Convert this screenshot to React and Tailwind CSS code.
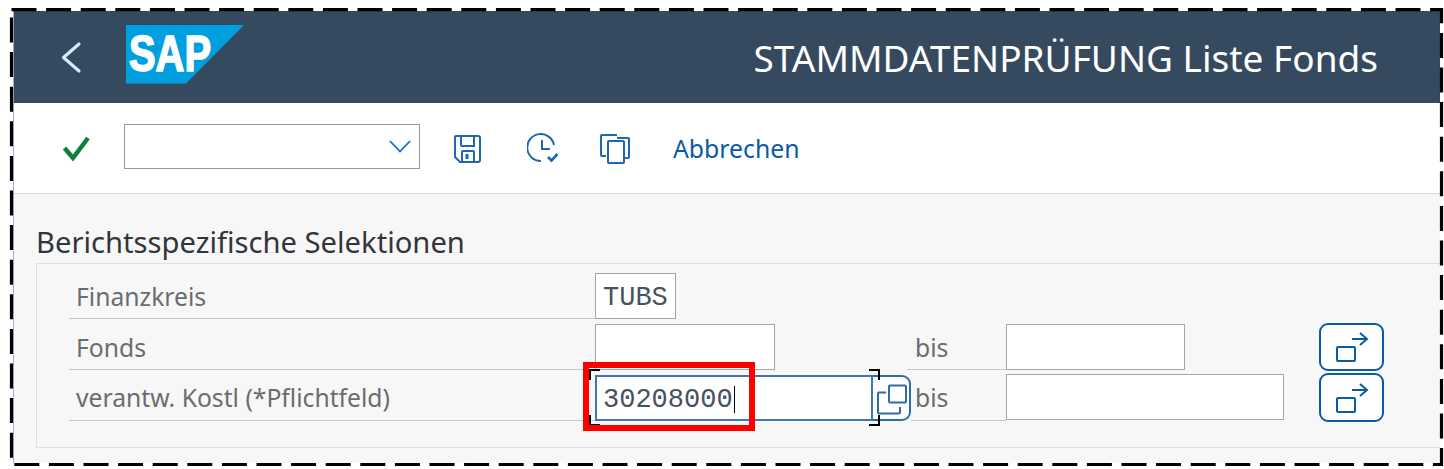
import React from "react";

const sans = { fontFamily: '"Noto Sans", sans-serif' };

function ValueHelpArrow({ tall }) {
  return (
    <button className={`w-[65px] ${tall ? "h-[49px]" : "h-[48px]"} rounded-[9px] border-2 border-[#0a5aa6] bg-white flex items-center justify-center shrink-0`}>
      <svg width="46" height="38" viewBox="0 0 46 38" fill="none" stroke="#0a5aa6" strokeWidth="2">
        <rect x="8" y="19" width="18" height="14" rx="1" />
        <path d="M23 11H38M31 5L38 11L31 17" />
      </svg>
    </button>
  );
}

function Field({ w, value, focused }) {
  return (
    <div
      className={`h-[46px] flex items-center bg-white shrink-0 text-[#46525e] text-[27px] ${focused ? "pl-[6px] pt-[4px] border-2 border-[#4178b0]" : "pl-[7px] pt-[4px] border border-[#a3a7ac]"}`}
      style={{ width: w, fontFamily: '"Liberation Mono", monospace' }}
    >
      {value}
      {focused && <span className="w-px h-[27px] bg-black ml-[1px] mt-[-2px]" />}
    </div>
  );
}

function Label({ children, nudge }) {
  return (
    <div className={`w-[526px] h-full flex items-center pl-[7px] ${nudge ? "pt-[8px]" : "pt-[6px]"} text-[24.7px] text-[#6a6d70] shrink-0 border-b border-b-[#c8c8c8] whitespace-nowrap`}>
      {children}
    </div>
  );
}

function Bis({ nudge }) {
  return (
    <span className={`w-[90px] h-[46px] flex items-center text-[24.7px] text-[#6a6d70] shrink-0 border-b border-b-[#c8c8c8] ${nudge ? "pt-[2px]" : ""}`}>
      <span className="ml-[-1px]">bis</span>
    </span>
  );
}

export default function App() {
  return (
    <div className="relative w-[1444px] h-[469px] bg-white pt-[11px] pl-[13px] pr-[4px] pb-[6px]" style={sans}>
      <div className="h-full flex flex-col border-l border-l-[#9db2cf]">
        <header className="h-[92px] shrink-0 bg-[#354a5f] flex items-center pl-[41px] pr-[62px]">
          <svg width="32" height="34" viewBox="0 0 32 34" fill="none" className="shrink-0">
            <path d="M24 4L8.5 17.5L24 31" stroke="#d6e8fb" strokeWidth="3.2" strokeLinecap="round" strokeLinejoin="round" />
          </svg>
          <svg width="118" height="60" viewBox="0 0 118 60" className="ml-[39px] mt-[-4px] shrink-0">
            <path d="M0 0H118L60 58.5H0Z" fill="#009fdf" />
            <text x="3" y="46" textLength="82" lengthAdjust="spacingAndGlyphs" fontFamily='"Liberation Sans", sans-serif' fontWeight="700" fontSize="50" fill="#fff" stroke="#fff" strokeWidth="1.6">SAP</text>
          </svg>
          <h1 className="ml-auto mt-[1px] text-[37px] text-white font-normal whitespace-nowrap">STAMMDATENPRÜFUNG Liste Fonds</h1>
        </header>

        <div className="h-[91px] shrink-0 bg-white border-b border-b-[#d9d9d9] flex items-center pl-[49px]">
          <svg width="28" height="26" viewBox="0 0 28 26" fill="none" className="shrink-0">
            <path d="M1.5 13L10 23L25 3" stroke="#107e3e" strokeWidth="4.5" />
          </svg>
          <div className="ml-[33px] mt-[-3px] w-[296px] h-[45px] border border-[#8f98a8] bg-white flex items-center justify-end pr-[8px] shrink-0">
            <svg width="22" height="13" viewBox="0 0 22 13" fill="none"><path d="M1 1L11 11.5L21 1" stroke="#0a6ed1" strokeWidth="1.8" /></svg>
          </div>
          <svg width="30" height="30" viewBox="0 0 30 30" fill="none" stroke="#1f68ae" strokeWidth="2" className="ml-[33px] mt-[2px] shrink-0">
            <path d="M3 2H25a2 2 0 0 1 2 2V26a2 2 0 0 1-2 2H7L2 23V3a1 1 0 0 1 1-1Z" />
            <path d="M8 2V11a1 1 0 0 0 1 1H21V2" />
            <path d="M9 28V18a1 1 0 0 1 1-1H20a1 1 0 0 1 1 1V28" />
            <path d="M14 20V25" strokeWidth="3" />
          </svg>
          <svg width="32" height="32" viewBox="0 0 32 32" fill="none" stroke="#1f68ae" strokeWidth="2" className="ml-[44px] mt-[2px] shrink-0">
            <path d="M27 12A13.5 13.5 0 1 0 14 28" />
            <path d="M15 7V16H23" />
            <path d="M21 24L24.5 27.5L30.5 21" strokeWidth="2.6" />
          </svg>
          <svg width="32" height="32" viewBox="0 0 32 32" fill="none" stroke="#1f68ae" strokeWidth="2" className="ml-[40px] mt-[2px] shrink-0">
            <path d="M7 23H3a1 1 0 0 1-1-1V3a1 1 0 0 1 1-1H18" />
            <path d="M18 5H29a1 1 0 0 1 1 1V24a1 1 0 0 1-1 1H26" />
            <rect x="9" y="8" width="16" height="22" rx="1" />
          </svg>
          <span className="ml-[42px] mt-[2px] text-[24.8px] text-[#0a5aa6] whitespace-nowrap">Abbrechen</span>
        </div>

        <main className="flex-1 min-h-0 bg-[#f7f7f7] pl-[22px] pt-[28px] overflow-hidden">
          <h2 className="text-[29.2px] leading-[40px] mb-[1px] text-[#32363a] font-normal whitespace-nowrap">Berichtsspezifische Selektionen</h2>
          <section className="h-[185px] border border-[#e0e0e0] border-r-0 pt-[5px] pl-[32px]">
            <div className="h-[50px] flex items-end">
              <Label>Finanzkreis</Label>
              <Field w="81px" value="TUBS" />
            </div>
            <div className="h-[51px] flex items-end">
              <Label nudge>Fonds</Label>
              <Field w="180px" />
              <div className="w-[132px] shrink-0" />
              <div className="w-[9px] shrink-0 h-[46px] border-b border-b-[#c8c8c8]" />
              <Bis nudge />
              <Field w="179px" />
              <div className="w-[134px] shrink-0" />
              <div className="mb-[-1px]"><ValueHelpArrow /></div>
            </div>
            <div className="h-[51px] flex items-end">
              <Label>verantw. Kostl (*Pflichtfeld)</Label>
              <div className="flex shrink-0">
                <Field w="278px" value="30208000" focused />
                <button className="w-[38px] h-[46px] rounded-r-[9px] border-2 border-l-0 border-[#2f6da8] bg-white flex items-center justify-start pl-[4px] shrink-0">
                  <svg width="32" height="34" viewBox="0 0 32 34" fill="none" stroke="#2f6da8" strokeWidth="2">
                    <rect x="12" y="4.5" width="17" height="17" rx="1" />
                    <path d="M9 11.5H2a1 1 0 0 0-1 1V31.5a1 1 0 0 0 1 1H22a1 1 0 0 0 1-1V26" />
                  </svg>
                </button>
              </div>
              <span className="w-[5px] h-[46px] shrink-0 border-b border-b-[#c8c8c8]" />
              <Bis />
              <div className="mb-[1px] shrink-0"><Field w="278px" /></div>
              <div className="w-[35px] shrink-0" />
              <div className="mb-[-1px]"><ValueHelpArrow tall /></div>
            </div>
          </section>
        </main>
      </div>

      {/* focus corner brackets and dashed selection frame */}
      <svg className="absolute left-0 top-0 pointer-events-none" width="1444" height="469" fill="none">
        <path d="M600 370H590V380M590 415V425H600M869 370H879V380M879 415V425H869" stroke="#000" strokeWidth="2" />
        <rect x="11.5" y="9.7" width="1430" height="454.8" stroke="#000" strokeWidth="3.2" strokeDasharray="25 9.6" />
      </svg>
      <div className="absolute left-[583px] top-[362px] w-[172px] h-[69px] border-[6px] border-[#ff0000] pointer-events-none" />
    </div>
  );
}
